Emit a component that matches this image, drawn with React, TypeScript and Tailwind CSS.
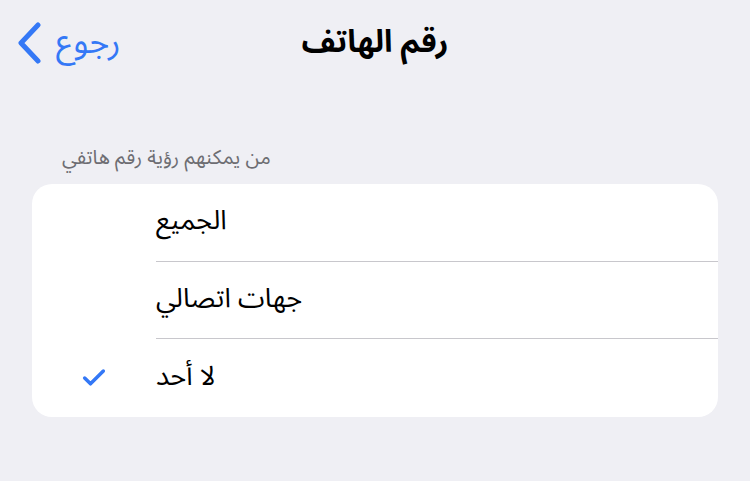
import { Check } from "lucide-react";

const font = { fontFamily: '"Noto Sans Arabic", "DejaVu Sans", "Noto Sans", sans-serif' };

const options = [
  { label: "الجميع", checked: false },
  { label: "جهات اتصالي", checked: false },
  { label: "لا أحد", checked: true },
];

export default function App() {
  return (
    <div dir="ltr" className="w-[750px] h-[481px] bg-[#efeff4] overflow-hidden" style={font}>
      {/* Nav bar */}
      <div className="grid grid-cols-[1fr_auto_1fr] items-center h-[86px]">
        <button className="flex items-center gap-[14px] pl-[16px] text-[#3478f6]">
          <svg width="26" height="42" viewBox="0 0 26 42" fill="none">
            <path d="M22 3 L5 21 L22 39" stroke="currentColor" strokeWidth="5" strokeLinecap="round" strokeLinejoin="round" />
          </svg>
          <span className="text-[34px] leading-none pb-[2px]">رجوع</span>
        </button>
        <h1 className="text-[31px] font-bold text-black leading-none pb-[2px]">رقم الهاتف</h1>
        <div />
      </div>

      {/* Section header */}
      <div className="pl-[62px] pt-[58px] pb-[12px] text-[20px] leading-[28px] text-[#6d6d72]">
        من يمكنهم رؤية رقم هاتفي
      </div>

      {/* Options card */}
      <div className="mx-[32px] rounded-[20px] bg-white overflow-hidden">
        {options.map((o, i) => (
          <div key={o.label} className="flex h-[77.7px]">
            <div className="w-[124px] flex items-center justify-center">
              {o.checked && <Check size={28} strokeWidth={3} className="text-[#3478f6]" />}
            </div>
            <div
              className={`flex-1 flex items-center text-[27px] text-black ${
                i < options.length - 1 ? "border-b border-[#c8c7cc]" : ""
              }`}
            >
              <span className="pb-[2px]">{o.label}</span>
            </div>
          </div>
        ))}
      </div>
    </div>
  );
}
